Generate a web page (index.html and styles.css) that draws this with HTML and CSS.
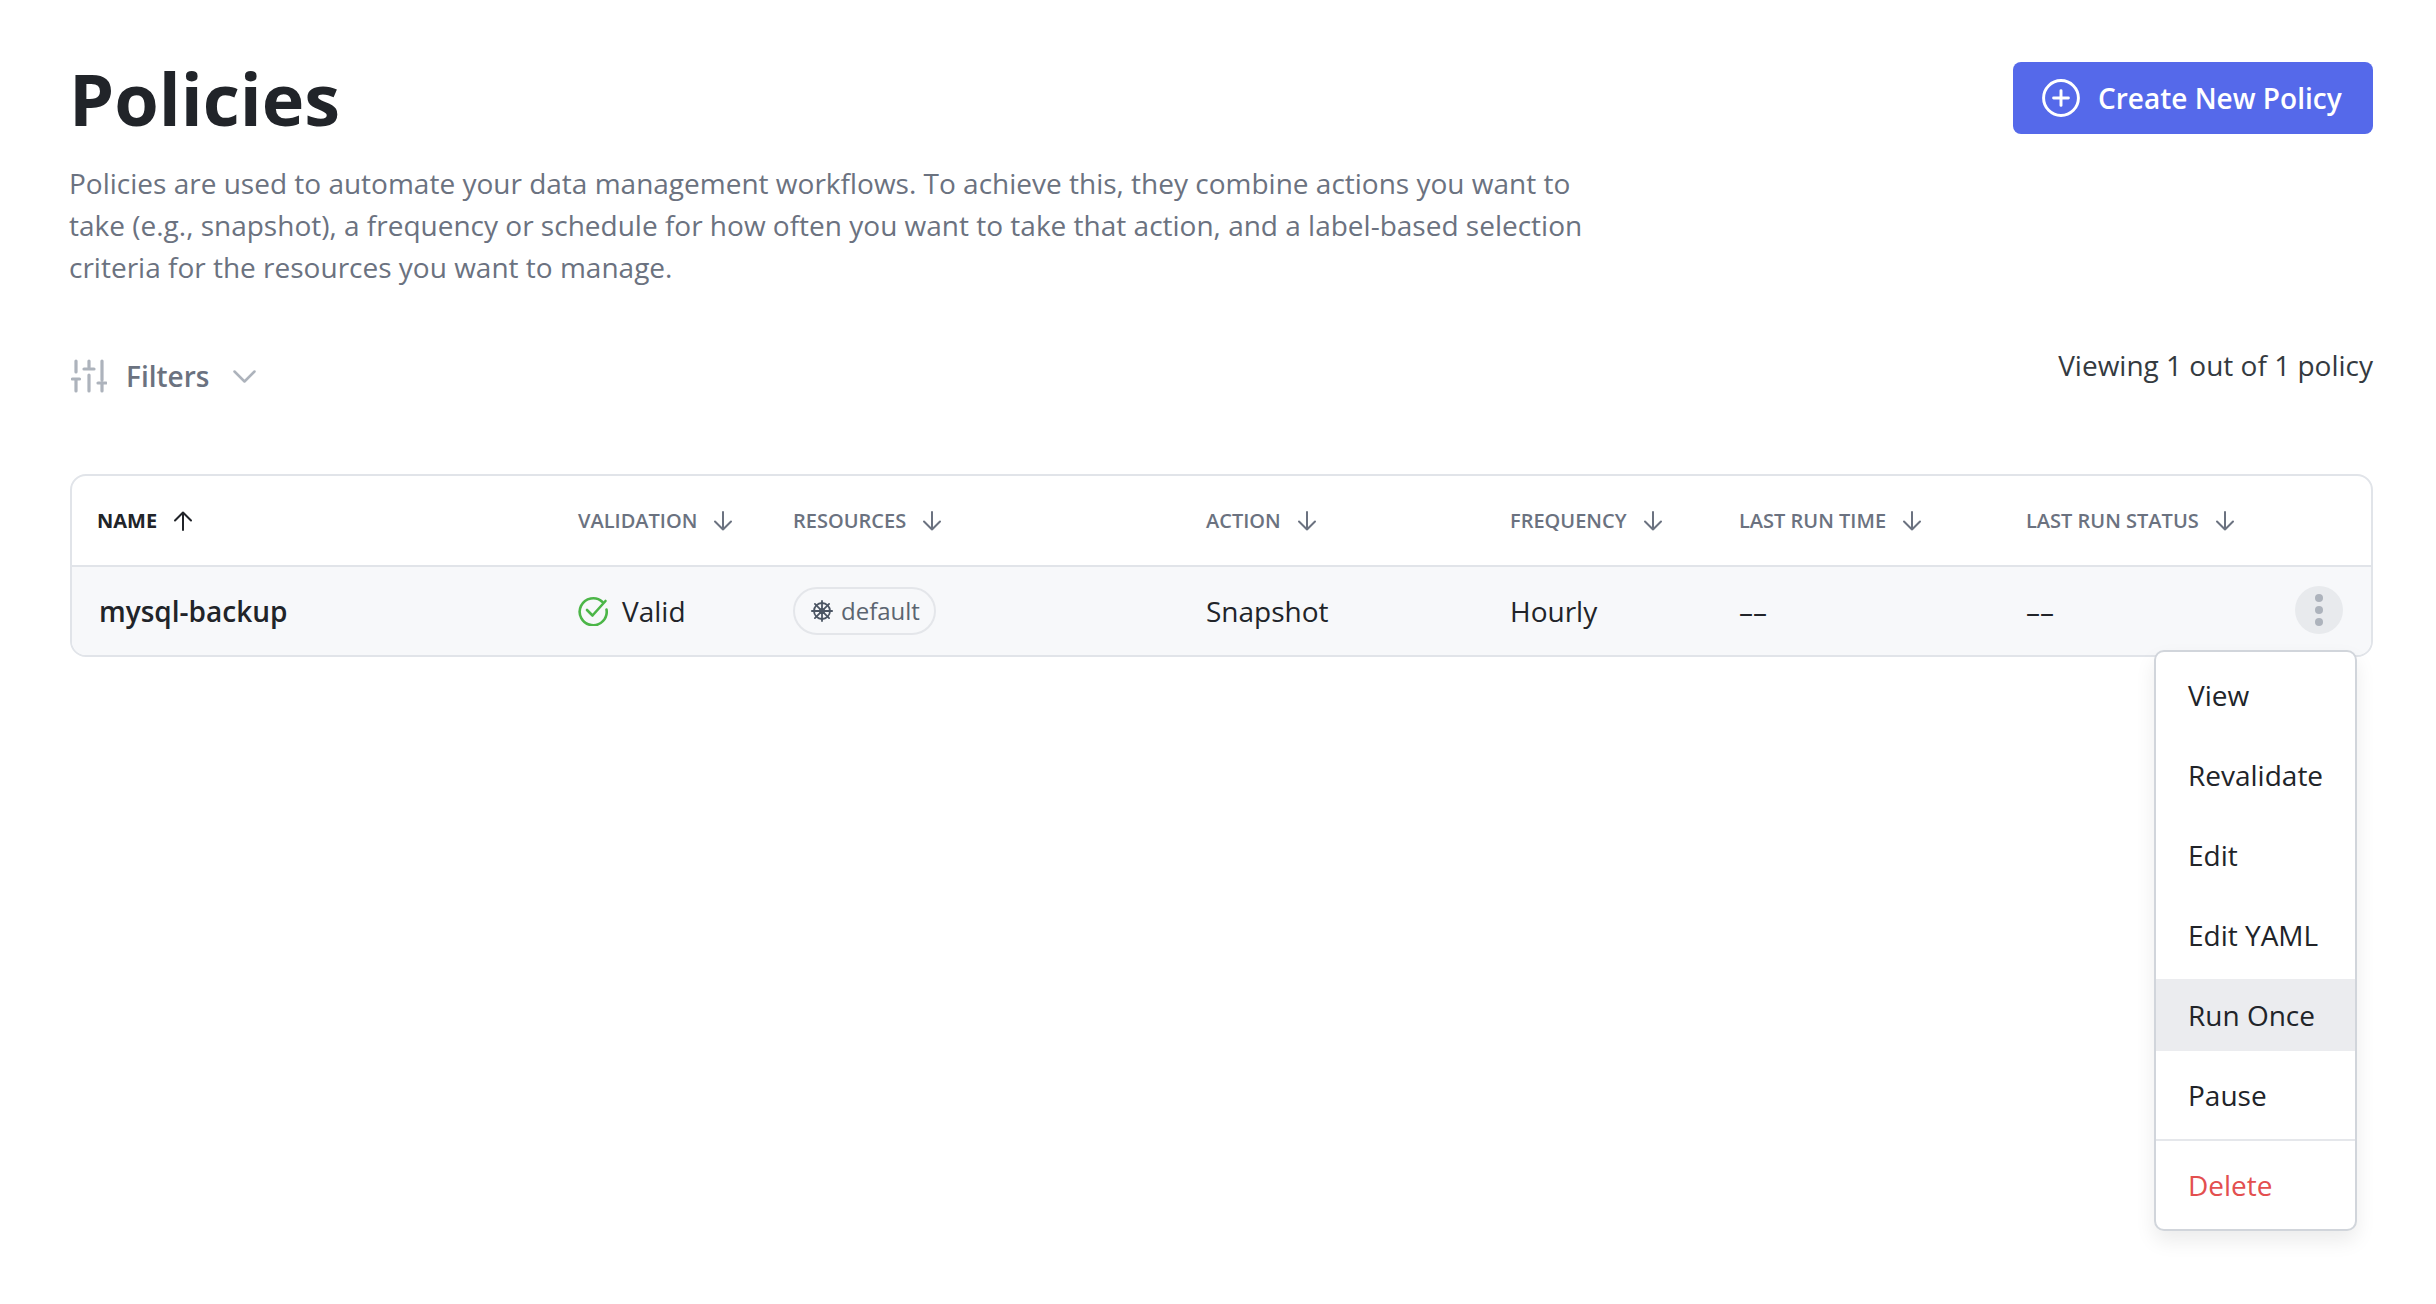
FILE: index.html
```html
<!DOCTYPE html>
<html lang="en">
<head>
<meta charset="utf-8">
<title>Policies</title>
<link rel="stylesheet" href="styles.css">
</head>
<body>
<main class="page">
  <header class="head">
    <div class="head-text">
      <h1 class="title">Policies</h1>
      <p class="desc">Policies are used to automate your data management workflows. To achieve this, they combine actions you want to take (e.g., snapshot), a frequency or schedule for how often you want to take that action, and a label-based selection criteria for the resources you want to manage.</p>
    </div>
    <button class="create">
      <svg class="create-icon" viewBox="0 0 36 36" fill="none" stroke="#fff" stroke-width="2.8" stroke-linecap="round"><circle cx="18" cy="18" r="16.500"/><path d="M18 11v14M11 18h14"/></svg>
      <span>Create New Policy</span>
    </button>
  </header>

  <section class="toolbar">
    <div class="filters">
      <svg class="filters-icon" viewBox="0 0 36 34" fill="none" stroke="#adb3bc" stroke-width="3.200" stroke-linecap="round"><path d="M5 2v11M1.500 20h7M5 20v12M18 2v6M13 10h10M18 16v16M31 2v19M27 24h8M31 24v8"/></svg>
      <span class="filters-label">Filters</span>
      <svg class="filters-chev" viewBox="0 0 23 13" fill="none" stroke="#adb3bc" stroke-width="2.500" stroke-linecap="round" stroke-linejoin="round"><path d="M1.500 1.500l10 10 10-10"/></svg>
    </div>
    <div class="count">Viewing 1 out of 1 policy</div>
  </section>

  <section class="table">
    <div class="row row-head">
      <div class="th th-active">NAME <svg class="sort" viewBox="0 0 20 20" fill="none" stroke="currentColor" stroke-width="2" stroke-linecap="round" stroke-linejoin="round"><path d="M10 19V1.500M2 9.500l8-8 8 8"/></svg></div>
      <div class="th">VALIDATION <svg class="sort" viewBox="0 0 20 20" fill="none" stroke="currentColor" stroke-width="2" stroke-linecap="round" stroke-linejoin="round"><path d="M10 1v17.500M2 10.500l8 8 8-8"/></svg></div>
      <div class="th">RESOURCES <svg class="sort" viewBox="0 0 20 20" fill="none" stroke="currentColor" stroke-width="2" stroke-linecap="round" stroke-linejoin="round"><path d="M10 1v17.500M2 10.500l8 8 8-8"/></svg></div>
      <div class="th">ACTION <svg class="sort" viewBox="0 0 20 20" fill="none" stroke="currentColor" stroke-width="2" stroke-linecap="round" stroke-linejoin="round"><path d="M10 1v17.500M2 10.500l8 8 8-8"/></svg></div>
      <div class="th">FREQUENCY <svg class="sort" viewBox="0 0 20 20" fill="none" stroke="currentColor" stroke-width="2" stroke-linecap="round" stroke-linejoin="round"><path d="M10 1v17.500M2 10.500l8 8 8-8"/></svg></div>
      <div class="th">LAST RUN TIME <svg class="sort" viewBox="0 0 20 20" fill="none" stroke="currentColor" stroke-width="2" stroke-linecap="round" stroke-linejoin="round"><path d="M10 1v17.500M2 10.500l8 8 8-8"/></svg></div>
      <div class="th">LAST RUN STATUS <svg class="sort" viewBox="0 0 20 20" fill="none" stroke="currentColor" stroke-width="2" stroke-linecap="round" stroke-linejoin="round"><path d="M10 1v17.500M2 10.500l8 8 8-8"/></svg></div>
      <div class="th"></div>
    </div>
    <div class="row row-body">
      <div class="td td-name">mysql-backup</div>
      <div class="td td-valid">
        <svg class="check" viewBox="0 0 30 30" fill="none" stroke="#4cb648" stroke-width="2.600" stroke-linecap="round" stroke-linejoin="round"><path d="M24.500 6A13.500 13.500 0 1 0 28.500 13.500"/><path d="M9 14l5.500 5.500L27.500 5"/></svg>
        <span>Valid</span>
      </div>
      <div class="td">
        <span class="chip">
          <svg class="helm" viewBox="0 0 22 22" fill="none" stroke="#4b5563" stroke-width="1.800" stroke-linecap="round"><circle cx="11" cy="11" r="8"/><circle cx="11" cy="11" r="2.200"/><path d="M11 .9v20.200M.9 11h20.200M3.900 3.900l14.200 14.200M18.100 3.900L3.900 18.100"/></svg>
          <span>default</span>
        </span>
      </div>
      <div class="td">Snapshot</div>
      <div class="td">Hourly</div>
      <div class="td">––</div>
      <div class="td">––</div>
      <div class="td td-more">
        <button class="kebab"><i class="dot"></i><i class="dot"></i><i class="dot"></i></button>
      </div>
    </div>
    <ul class="menu">
      <li class="item">View</li>
      <li class="item">Revalidate</li>
      <li class="item">Edit</li>
      <li class="item">Edit YAML</li>
      <li class="item item-hover">Run Once</li>
      <li class="item">Pause</li>
      <li class="sep"></li>
      <li class="item item-danger">Delete</li>
    </ul>
  </section>
</main>
</body>
</html>
```
FILE: styles.css
```css
* { box-sizing: border-box; }
html, body { margin: 0; padding: 0; background: #fff; }
body { min-height: 1304px; font-family: "Open Sans", "Noto Sans", sans-serif; color: #1f2328; }
.page { min-height: 1304px; padding: 62px 63px 0 70px; }

.head { display: flex; justify-content: space-between; align-items: flex-start; }
.head-text { width: 1545px; margin-left: -1px; }
.title { margin: 0; font-size: 72px; line-height: 72px; font-weight: 700; color: #212429; }
.desc { margin: 28px 0 0; font-size: 28px; line-height: 42px; color: #6b7280; }

.create { display: flex; align-items: center; gap: 18px; width: 360px; height: 72px; padding: 0 0 0 29px; border: 0; border-radius: 8px; background: #5569ea; color: #fff; font: 600 28px/1 "Open Sans", sans-serif; }
.create-icon { width: 38px; height: 38px; flex: none; }

.toolbar { display: flex; justify-content: space-between; align-items: flex-start; margin-top: 71px; }
.filters { display: flex; align-items: center; height: 34px; margin-top: 0; }
.filters-icon { width: 36px; height: 34px; margin-left: 1px; flex: none; }
.filters-label { margin-left: 19px; font-size: 28px; line-height: 34px; font-weight: 600; color: #6b7280; }
.filters-chev { width: 23px; height: 13px; margin-left: 24px; flex: none; }
.count { margin-top: -15px; font-size: 28px; line-height: 42px; color: #343a40; }

.table { position: relative; margin-top: 81px; border: 2px solid #e1e4e9; border-radius: 16px; }
.row { display: grid; grid-template-columns: 506px 215px 413px 304px 229px 287px 1fr 76px; }
.row-head { height: 91px; align-items: center; border-bottom: 2px solid #e1e4e9; }
.row-body { height: 88px; align-items: center; background: #f7f8fa; border-radius: 0 0 14px 14px; }

.th { display: flex; align-items: center; gap: 16px; font-size: 20px; line-height: 28px; font-weight: 600; color: #6b7280; white-space: nowrap; }
.th:first-child { padding-left: 25px; }
.th-active { color: #212429; font-weight: 700; }
.sort { width: 20px; height: 20px; flex: none; }

.td { font-size: 28px; line-height: 42px; color: #212429; white-space: nowrap; }
.td-name { padding-left: 27px; font-weight: 600; }
.td-valid { display: flex; align-items: center; gap: 14px; }
.check { width: 30px; height: 30px; flex: none; }
.chip { display: inline-flex; align-items: center; gap: 8px; height: 48px; padding: 0 14px 0 16px; border: 2px solid #e4e6ea; border-radius: 24px; font-size: 24px; line-height: 1; color: #5b6470; vertical-align: middle; }
.helm { width: 22px; height: 22px; flex: none; }
.td-more { display: flex; justify-content: flex-start; padding-left: 0; }

.kebab { display: flex; flex-direction: column; align-items: center; justify-content: center; gap: 4px; width: 48px; height: 48px; margin-bottom: 3px; padding: 0; border: 0; border-radius: 50%; background: #e8eaed; }
.dot { display: block; width: 8px; height: 8px; border-radius: 50%; background: #adb3bc; }

.menu { position: absolute; top: 174px; right: 14px; width: 203px; margin: 0; padding: 7px 0 8px; list-style: none; background: #fff; border: 2px solid #d1d5db; border-radius: 10px; box-shadow: 0 10px 20px rgba(0,0,0,.08); }
.item { display: flex; align-items: center; height: 72px; margin-bottom: 8px; padding-left: 32px; font-size: 28px; color: #212429; }
.item:last-child { margin-bottom: 0; }
.item-hover { background: #ebecef; }
.item-danger { color: #e34f4f; }
.sep { height: 2px; margin-bottom: 8px; background: #e5e7eb; }
```
